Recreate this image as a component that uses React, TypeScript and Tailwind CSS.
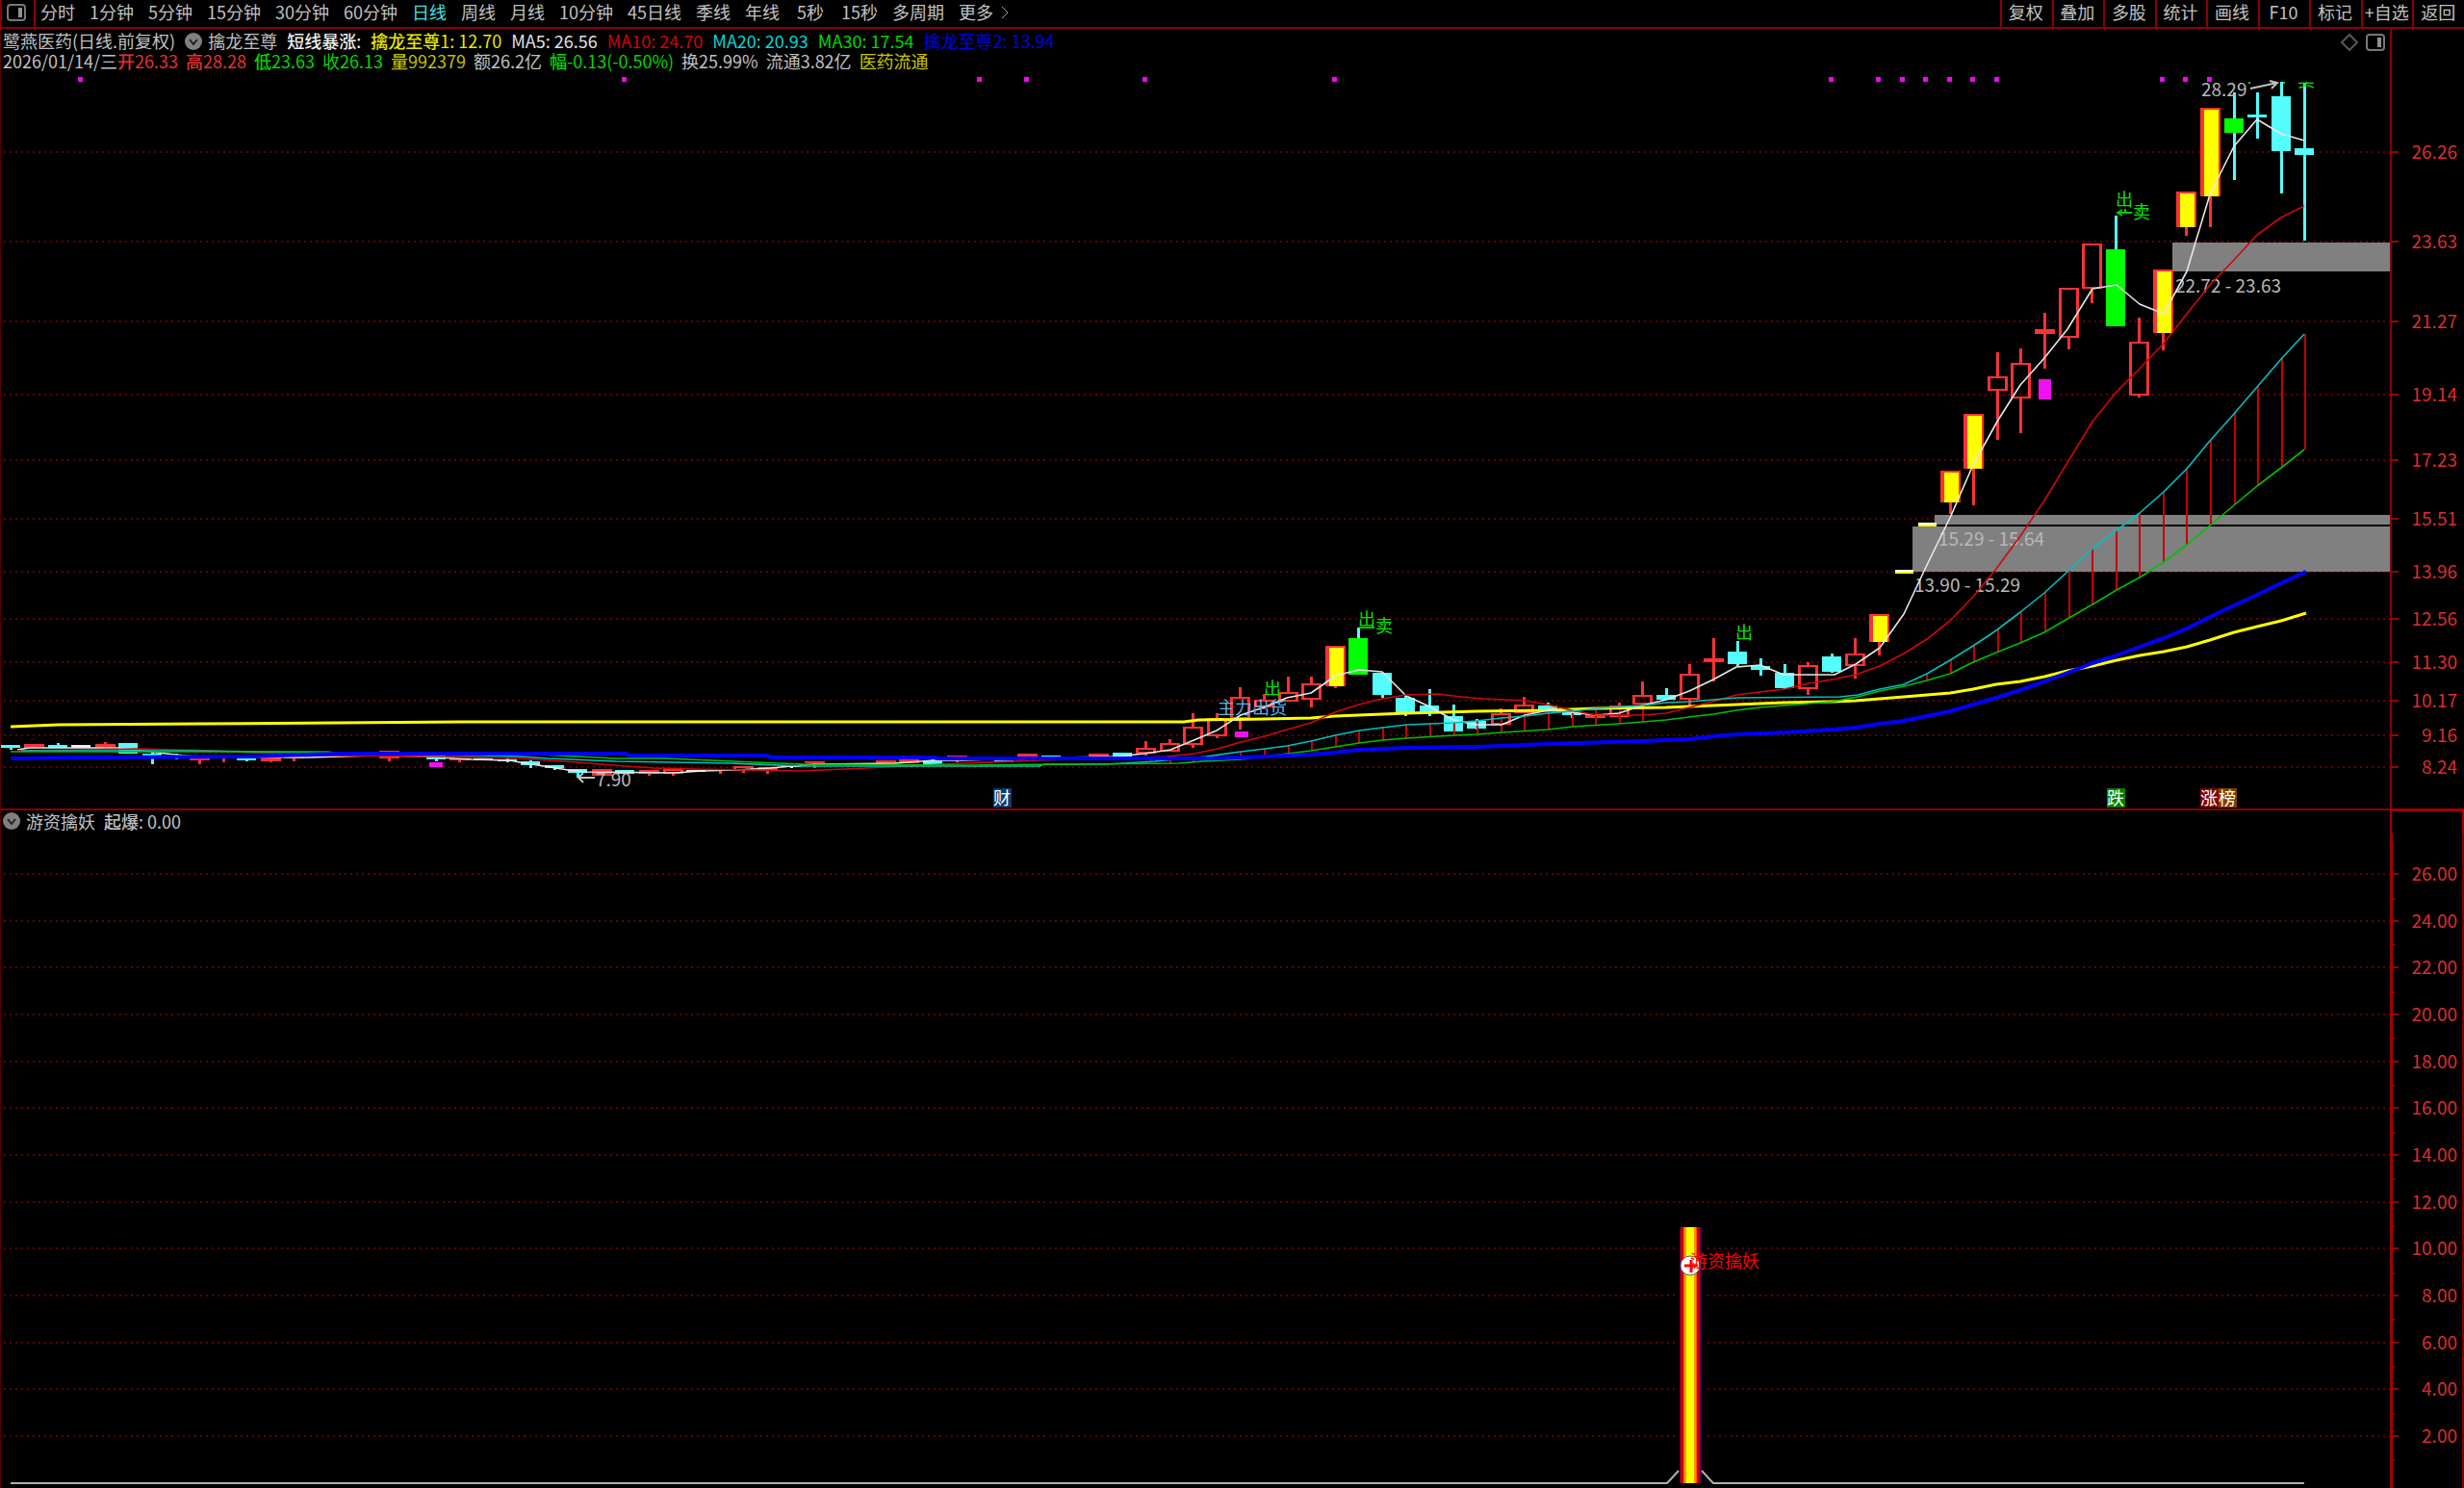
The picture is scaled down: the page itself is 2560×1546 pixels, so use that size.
import React from "react";

type Kind = "R" | "F" | "C" | "Y" | "G" | "W";
// index, high, body top, body bottom, low, kind (chart units)
type Candle = [number, number, number, number, number, Kind];
type Pt = [number, number];

const FONT = "font-['Noto_Sans_CJK_SC','Noto_Sans',sans-serif]";
const AXIS_X = 2484;
const RED = "#ff3232";
const CYAN = "#54fcfc";

const xAt = (i: number) => Math.round(10.5 + 24.576 * i);

const periods = ["分时", "1分钟", "5分钟", "15分钟", "30分钟", "60分钟", "日线", "周线", "月线", "10分钟", "45日线", "季线", "年线", "5秒", "15秒", "多周期"];
const tools = ["复权", "叠加", "多股", "统计", "画线", "F10", "标记", "+自选", "返回"];

const candles: Candle[] = [
  [0, 774, 774, 777, 779, "C"], [1, 773, 773, 777, 777, "F"], [2, 772, 774, 777, 777, "C"], [3, 774, 774, 777, 777, "W"],
  [4, 771, 773, 777, 777, "F"], [5, 772, 772, 783, 783, "C"], [6, 781, 783, 785, 794, "C"], [7, 783, 786, 788, 789, "C"],
  [8, 788, 788, 790, 794, "F"], [9, 786, 786, 788, 792, "F"], [10, 788, 788, 790, 791, "C"], [11, 787, 787, 791, 792, "F"],
  [12, 786, 786, 788, 791, "F"], [16, 780, 780, 788, 791, "R"], [18, 784, 784, 789, 791, "C"], [19, 788, 788, 790, 792, "F"],
  [20, 788, 788, 790, 790, "C"], [21, 788, 789, 791, 792, "C"], [22, 790, 791, 795, 798, "C"], [23, 795, 795, 798, 800, "C"],
  [24, 799, 799, 803, 808, "C"], [25, 799, 799, 806, 806, "F"], [26, 800, 800, 804, 804, "C"], [27, 800, 800, 804, 806, "F"],
  [28, 799, 799, 804, 806, "R"], [29, 800, 800, 802, 802, "W"], [30, 799, 799, 801, 804, "F"], [31, 796, 796, 800, 803, "R"],
  [32, 797, 797, 800, 804, "F"], [33, 795, 795, 797, 798, "W"], [34, 791, 791, 793, 798, "F"], [37, 790, 790, 793, 793, "F"],
  [38, 788, 788, 793, 793, "F"], [39, 788, 790, 794, 794, "C"], [40, 785, 785, 787, 792, "F"], [42, 789, 790, 791, 791, "C"],
  [43, 783, 783, 786, 786, "F"], [44, 785, 785, 787, 787, "C"], [46, 783, 783, 786, 790, "F"], [47, 782, 782, 786, 786, "C"],
  [48, 770, 777, 783, 785, "R"], [49, 768, 772, 781, 781, "R"], [50, 741, 755, 774, 777, "R"], [51, 741, 746, 765, 767, "R"],
  [52, 714, 724, 747, 758, "R"], [53, 721, 727, 735, 737, "R"], [54, 703, 719, 729, 729, "R"], [55, 703, 710, 727, 735, "R"],
  [56, 672, 672, 713, 715, "Y"], [57, 652, 663, 701, 701, "G"], [58, 699, 699, 722, 725, "C"], [59, 722, 725, 741, 744, "C"],
  [60, 716, 733, 740, 744, "C"], [61, 732, 744, 760, 760, "C"], [62, 747, 749, 757, 758, "C"], [63, 736, 741, 753, 753, "R"],
  [64, 724, 732, 741, 741, "R"], [65, 730, 733, 738, 738, "C"], [66, 739, 740, 743, 746, "C"], [67, 742, 742, 746, 746, "F"],
  [68, 730, 733, 745, 745, "R"], [69, 708, 722, 732, 732, "R"], [70, 715, 722, 727, 727, "C"], [71, 690, 700, 727, 733, "R"],
  [72, 663, 684, 688, 708, "F"], [73, 666, 677, 690, 692, "C"], [74, 684, 692, 696, 702, "C"], [75, 690, 699, 715, 716, "C"],
  [76, 688, 691, 716, 722, "R"], [77, 679, 682, 698, 699, "C"], [78, 663, 679, 692, 705, "R"], [79, 639, 639, 667, 681, "Y"],
  [82, 490, 490, 522, 534, "Y"], [83, 431, 431, 487, 525, "Y"], [84, 366, 391, 406, 457, "R"], [85, 362, 377, 414, 450, "R"],
  [86, 325, 342, 347, 383, "F"], [87, 299, 299, 351, 363, "R"], [88, 253, 253, 300, 315, "R"], [89, 224, 259, 339, 339, "G"],
  [90, 330, 355, 411, 413, "R"], [91, 281, 281, 346, 364, "Y"], [92, 200, 200, 236, 245, "Y"], [93, 113, 113, 204, 236, "Y"],
  [94, 96, 123, 138, 187, "G"], [95, 96, 119, 122, 144, "C"], [96, 85, 100, 157, 201, "C"], [97, 86, 154, 161, 250, "C"],
];

const ma5: Pt[] = [[18, 779], [30, 777], [122, 777], [146, 780], [182, 784], [206, 786], [320, 787], [390, 785], [440, 786], [490, 789], [530, 790], [540, 792], [565, 796], [590, 800], [610, 802], [700, 803], [730, 801], [765, 800], [800, 798], [845, 794], [930, 793], [970, 790], [1000, 790], [1100, 787], [1160, 786], [1189, 783], [1216, 779], [1238, 770], [1264, 759], [1289, 743], [1313, 735], [1337, 725], [1362, 720], [1375, 711], [1387, 702], [1412, 696], [1436, 698], [1461, 723], [1485, 734], [1510, 748], [1534, 753], [1560, 753], [1584, 743], [1608, 738], [1633, 740], [1658, 743], [1682, 741], [1706, 733], [1731, 727], [1755, 718], [1780, 706], [1804, 693], [1829, 691], [1853, 701], [1906, 701], [1928, 690], [1953, 673], [1978, 638], [2002, 587], [2026, 538], [2050, 483], [2075, 438], [2099, 400], [2124, 372], [2148, 342], [2174, 300], [2199, 296], [2223, 316], [2248, 326], [2272, 282], [2296, 202], [2321, 152], [2345, 124], [2370, 139], [2394, 146]];
const ma10: Pt[] = [[18, 780], [146, 778], [220, 780], [260, 782], [340, 785], [450, 786], [540, 788], [600, 792], [650, 796], [680, 798], [720, 799], [832, 801], [900, 798], [1000, 793], [1080, 790], [1150, 788], [1212, 786], [1241, 783], [1265, 778], [1289, 771], [1314, 765], [1337, 758], [1362, 751], [1387, 740], [1412, 732], [1436, 726], [1461, 722], [1494, 721], [1518, 724], [1542, 726], [1584, 728], [1608, 732], [1633, 738], [1658, 743], [1706, 743], [1731, 741], [1755, 735], [1779, 729], [1804, 722], [1828, 719], [1854, 716], [1879, 710], [1904, 706], [1928, 701], [1953, 692], [1978, 679], [2002, 664], [2026, 645], [2050, 620], [2074, 591], [2099, 557], [2124, 520], [2149, 479], [2174, 438], [2199, 407], [2223, 383], [2248, 357], [2272, 326], [2296, 296], [2322, 269], [2345, 244], [2370, 226], [2394, 214]];
const ma20: Pt[] = [[22, 780], [200, 780], [330, 782], [390, 784], [500, 785], [540, 786], [570, 788], [640, 791], [760, 793], [835, 796], [1080, 796], [1085, 794], [1150, 794], [1200, 791], [1253, 786], [1289, 781], [1314, 778], [1337, 775], [1362, 770], [1387, 764], [1412, 759], [1436, 756], [1461, 753], [1510, 751], [1534, 749], [1560, 746], [1584, 744], [1608, 741], [1633, 739], [1658, 736], [1706, 733], [1731, 730], [1755, 729], [1780, 727], [1804, 725], [1912, 724], [1930, 722], [1953, 716], [1978, 711], [2002, 700], [2026, 686], [2050, 671], [2074, 655], [2099, 636], [2124, 616], [2148, 594], [2175, 569], [2199, 551], [2223, 533], [2248, 511], [2272, 487], [2296, 458], [2321, 430], [2345, 402], [2370, 373], [2394, 347]];
const ma30: Pt[] = [[11, 781], [340, 781], [355, 783], [560, 784], [600, 786], [640, 788], [690, 788], [740, 790], [785, 792], [835, 794], [1000, 795], [1225, 793], [1249, 791], [1289, 789], [1337, 783], [1362, 780], [1387, 776], [1412, 772], [1436, 769], [1461, 767], [1510, 764], [1534, 763], [1560, 761], [1608, 758], [1633, 755], [1682, 752], [1731, 748], [1755, 745], [1780, 742], [1804, 738], [1828, 735], [1904, 729], [1930, 724], [1953, 718], [1978, 713], [2002, 707], [2026, 700], [2050, 688], [2074, 678], [2099, 668], [2124, 657], [2148, 643], [2174, 628], [2199, 613], [2223, 600], [2248, 584], [2272, 566], [2296, 546], [2321, 525], [2345, 505], [2370, 486], [2394, 467]];
const dragon1: Pt[] = [[11, 755], [61, 753], [207, 752], [478, 750], [1230, 750], [1245, 748], [1314, 747], [1362, 746], [1387, 744], [1461, 741], [1534, 739], [1608, 738], [1658, 736], [1731, 735], [1780, 733], [1853, 730], [1904, 729], [1928, 728], [1953, 726], [1978, 724], [2002, 722], [2026, 720], [2050, 716], [2074, 711], [2099, 708], [2124, 703], [2148, 697], [2174, 692], [2199, 686], [2223, 681], [2248, 677], [2272, 672], [2296, 665], [2321, 657], [2345, 651], [2370, 645], [2396, 637]];
const dragon2: Pt[] = [[11, 788], [84, 787], [256, 786], [355, 783], [650, 783], [654, 785], [797, 785], [801, 787], [970, 787], [975, 788], [1265, 788], [1313, 786], [1362, 784], [1387, 782], [1412, 779], [1461, 777], [1534, 776], [1608, 773], [1706, 770], [1755, 768], [1780, 765], [1804, 763], [1854, 761], [1904, 758], [1928, 756], [1953, 752], [1978, 749], [2002, 744], [2026, 739], [2050, 732], [2074, 725], [2099, 717], [2124, 708], [2148, 699], [2174, 689], [2199, 681], [2223, 672], [2248, 663], [2272, 653], [2296, 641], [2321, 629], [2345, 618], [2370, 606], [2396, 594]];

const yOn = (line: Pt[], x: number) => {
  for (let k = 1; k < line.length; k++) {
    const [x0, y0] = line[k - 1];
    const [x1, y1] = line[k];
    if (x <= x1) return y0 + ((y1 - y0) * (x - x0)) / (x1 - x0);
  }
  return line[line.length - 1][1];
};

const range = (a: number, b: number) => Array.from({ length: b - a + 1 }, (_, k) => a + k);
const sticks = [...range(48, 69), ...range(80, 97)];
const dots = [3, 26, 41, 43, 48, 56, 77, 79, 80, 81, 82, 83, 84, 91, 92, 93];

const priceTicks = ["26.26", "23.63", "21.27", "19.14", "17.23", "15.51", "13.96", "12.56", "11.30", "10.17", "9.16", "8.24"];
const priceY = (v: string) => Math.round(157.5 + (26.26 - Number(v)) * 35.47);
const countTicks = range(1, 13).map((n) => n * 2);
const countY = (v: number) => Math.round(1540.5 - v * 24.32);

function Line({ pts, color, width = 1.6 }: { pts: Pt[]; color: string; width?: number }) {
  return <polyline points={pts.map((p) => p.join(",")).join(" ")} fill="none" stroke={color} strokeWidth={width} strokeLinejoin="round" />;
}

function Bar({ c }: { c: Candle }) {
  const [i, hi, top, bot, lo, kind] = c;
  const x = xAt(i);
  const h = Math.max(bot - top, 2);
  const wick = kind === "C" || kind === "G" ? CYAN : kind === "W" ? "#f0f0f0" : RED;
  return (
    <g shapeRendering="crispEdges">
      {hi < top && <rect x={x - 1} y={hi} width={3} height={top - hi} fill={wick} />}
      {lo > bot && <rect x={x - 1} y={bot} width={3} height={lo - bot} fill={wick} />}
      {kind === "R" && (
        <path
          d={`M${x - 10} ${top}h21v${h}h-21z M${x - 7} ${top + 2}h15v${Math.max(h - 4, 1)}h-15z`}
          fillRule="evenodd"
          fill={RED}
        />
      )}
      {kind === "F" && <rect x={x - 10} y={top} width={21} height={h} fill={RED} />}
      {kind === "C" && <rect x={x - 10} y={top} width={20} height={h} fill={CYAN} />}
      {kind === "G" && <rect x={x - 10} y={top} width={20} height={h} fill="#00ff00" />}
      {kind === "W" && <rect x={x - 10} y={top} width={20} height={h} fill="#f0f0f0" />}
      {kind === "Y" && (
        <>
          <rect x={x - 10} y={top - 1} width={21} height={h + 1} fill={RED} />
          <rect x={x - 6} y={top + 1} width={15} height={h - 1} fill="#ffff00" />
        </>
      )}
    </g>
  );
}

function Grid({ ys }: { ys: number[] }) {
  return (
    <g stroke="#640000" strokeWidth={2} strokeDasharray="2 4" shapeRendering="crispEdges">
      {ys.map((y) => (
        <line key={y} x1={4} x2={AXIS_X} y1={y} y2={y} />
      ))}
    </g>
  );
}

function AxisLabels({ items }: { items: [string, number][] }) {
  return (
    <g className="text-[19px]">
      {items.map(([label, y]) => (
        <g key={label}>
          <rect x={AXIS_X} y={y - 1} width={8} height={2} fill="#a00000" />
          <text x={2553} y={y + 7} textAnchor="end" fill="#dc2c2c">
            {label}
          </text>
        </g>
      ))}
    </g>
  );
}

function Tag({ x, label, bg }: { x: number; label: string; bg: string }) {
  return (
    <g>
      <rect x={x} y={819} width={19} height={20} fill={bg} />
      <text x={x} y={836} fill="#ffffff">
        {label}
      </text>
    </g>
  );
}

function PriceChart() {
  return (
    <svg viewBox="0 76 2560 764" className="block w-full text-[18px]" role="img" aria-label="日线K线图">
      <defs>
        <clipPath id="top-edge">
          <rect x={2380} y={85} width={40} height={20} />
        </clipPath>
      </defs>
      <Grid ys={priceTicks.map(priceY)} />
      <rect x={0} y={76} width={1} height={764} fill="#5a0000" />
      <rect x={2257} y={252} width={226} height={30} fill="#808080" />
      <rect x={2010} y={535} width={473} height={10} fill="#808080" />
      <rect x={1987} y={547} width={496} height={47} fill="#808080" />
      <rect x={AXIS_X - 1} y={76} width={2} height={764} fill="#8c0000" />
      <AxisLabels items={priceTicks.map((t) => [t, priceY(t)])} />

      {dots.map((i) => (
        <rect key={i} x={xAt(i) - 3} y={80} width={5} height={5} fill="#ff00ff" />
      ))}

      {candles.map((c) => (
        <Bar key={c[0]} c={c} />
      ))}
      {[
        [1969, 593],
        [1993, 544],
      ].map(([x, y]) => (
        <g key={x}>
          <rect x={x} y={y} width={19} height={3} fill="#ffff00" />
          <rect x={x} y={y - 1} width={19} height={2} fill="#ffffff" />
        </g>
      ))}

      <g fill="#b8b8b8" className="text-[19px]">
        <text x={2260} y={304}>22.72 - 23.63</text>
        <text x={2014} y={567}>15.29 - 15.64</text>
        <text x={1989} y={615}>13.90 - 15.29</text>
        <text x={2287} y={100}>28.29</text>
        <text x={619} y={817}>7.90</text>
      </g>
      <g fill="none" stroke="#c0c0c0" strokeWidth={2}>
        <path d="M2338 92 L2366 86 M2358 84 L2366 86 L2360 92" />
        <path d="M601 808 H618 M606 803 L601 808 L606 813" />
      </g>

      <g stroke="#c80000" strokeWidth={2} shapeRendering="crispEdges">
        {sticks.map((i) => {
          const x = xAt(i) + 1;
          return <line key={i} x1={x} x2={x} y1={yOn(ma20, x)} y2={yOn(ma30, x)} />;
        })}
      </g>

      <Line pts={dragon1} color="#ffff00" width={3} />
      <Line pts={ma5} color="#e8e8e8" />
      <Line pts={ma10} color="#d00808" />
      <Line pts={ma20} color="#00c0c0" />
      <Line pts={ma30} color="#00c000" />
      <Line pts={dragon2} color="#0000ff" width={4} />

      <rect x={446} y={792} width={14} height={5} fill="#f010f0" />
      <rect x={1283} y={760} width={14} height={6} fill="#f010f0" />
      <rect x={2118} y={394} width={13} height={21} fill="#f010f0" />

      <g fill="#00e600">
        <text x={1313} y={722}>出</text>
        <text x={1411} y={650}>出</text>
        <text x={1429} y={657}>卖</text>
        <text x={1803} y={664}>出</text>
        <text x={2198} y={214}>出</text>
        <text x={2216} y={227}>卖</text>
        <text x={2387} y={90} clipPath="url(#top-edge)">卖</text>
        <rect x={2336} y={85} width={2} height={2} />
        <rect x={2372} y={85} width={2} height={2} />
      </g>
      <path d="M1412 652 H1428 M2200 221 H2215 M2205 218 L2200 221 L2205 224 M2208 217 V222" fill="none" stroke="#00c800" strokeWidth={2} />
      <text x={1265} y={742} fill="#5ab4e6">主力出货</text>

      <Tag x={1032} label="财" bg="#0c3c70" />
      <Tag x={2189} label="跌" bg="#008000" />
      <Tag x={2286} label="涨" bg="#800000" />
      <Tag x={2305} label="榜" bg="#804000" />
    </svg>
  );
}

function SignalChart() {
  return (
    <svg viewBox="0 866 2560 680" className="block w-full text-[18px]" role="img" aria-label="游资擒妖指标图">
      <Grid ys={countTicks.map(countY)} />
      <rect x={0} y={866} width={1} height={680} fill="#5a0000" />
      <rect x={AXIS_X - 1} y={866} width={3} height={680} fill="#a00000" />
      <rect x={2558} y={866} width={2} height={680} fill="#780000" />
      {countTicks.map((v) => (
        <rect key={v} x={AXIS_X} y={countY(v - 1)} width={4} height={2} fill="#a00000" />
      ))}
      <AxisLabels items={countTicks.map((v) => [v.toFixed(2), countY(v)])} />

      <g shapeRendering="crispEdges">
        <rect x={1741} y={1275} width={30} height={254} fill="#000000" />
        <rect x={1745} y={1275} width={23} height={266} fill="#500050" />
        <rect x={1746} y={1275} width={20} height={266} fill="#c80000" />
        <rect x={1749} y={1275} width={14} height={266} fill="#ff6000" />
        <rect x={1750} y={1275} width={12} height={266} fill="#ff9600" />
        <rect x={1752} y={1275} width={8} height={266} fill="#ffff00" />
      </g>
      <path d="M11 1541 H1732 L1744 1528 M1768 1528 L1780 1541 H2394" fill="none" stroke="#b0b0b0" strokeWidth={2} />
      <circle cx={1756} cy={1315} r={10} fill="#ffffff" stroke="#606060" strokeWidth={1} />
      <path d="M1750 1315 H1764 M1757 1309 V1322" stroke="#ff0000" strokeWidth={3} />
      <text x={1756} y={1317} fill="#ff0000">游资擒妖</text>
    </svg>
  );
}

function PanelIcon() {
  return (
    <svg viewBox="0 0 20 18" className="block h-[18px] w-5" aria-hidden="true">
      <rect x={1} y={1} width={18} height={16} rx={3} fill="none" stroke="#787878" strokeWidth={2} />
      <rect x={12} y={4} width={4} height={10} fill="#909090" />
    </svg>
  );
}

function DropButton({ label }: { label: string }) {
  return (
    <button type="button" aria-label={label} className="block h-[18px] w-[18px] shrink-0">
      <svg viewBox="0 0 18 18" className="block h-full w-full" aria-hidden="true">
        <circle cx={9} cy={9} r={9} fill="#808080" />
        <path d="M5 7 L9 12 L13 7" fill="none" stroke="#202020" strokeWidth={2} />
      </svg>
    </button>
  );
}

export default function App() {
  return (
    <main className={`flex min-h-screen w-full flex-col overflow-hidden bg-black text-[18px] leading-[21px] whitespace-nowrap text-[#c0c0c0] ${FONT}`}>
      <header className="flex h-[30px] items-stretch border-b-2 border-[#8c0000]">
        <button type="button" aria-label="切换侧栏" className="mr-[5px] flex w-[37px] items-center border-x-2 border-[#8c0000] pb-[2px] pl-[5px]">
          <PanelIcon />
        </button>
        <nav aria-label="周期" className="flex grow items-center gap-[15px] pb-[3px]">
          {periods.map((p) => (
            <button key={p} type="button" className={p === "日线" ? "text-[#40e0e0]" : p === "5秒" ? "px-[3px]" : ""}>
              {p}
            </button>
          ))}
          <button type="button" className="flex items-center gap-2">
            更多
            <svg viewBox="0 0 10 16" className="h-4 w-[10px]" aria-hidden="true">
              <path d="M1 2 L7 8 L1 14" fill="none" stroke="#a0a0a0" strokeWidth={1} />
            </svg>
          </button>
        </nav>
        <div className="grid w-[482px] grid-cols-9">
          {tools.map((t) => (
            <button key={t} type="button" className="flex items-center justify-center border-l-2 border-[#8c0000] pr-[2px] pb-[3px]">
              {t}
            </button>
          ))}
        </div>
      </header>

      <section aria-label="主图">
        <div className="flex border-l border-[#5a0000]">
          <div className="grow py-[2px] pl-[2px]">
            <div className="flex items-center gap-[10px]">
              <h1>鹭燕医药(日线.前复权)</h1>
              <DropButton label="选择主图指标" />
              <span className="-ml-1">擒龙至尊</span>
              <span className="text-[#f0f0f0]"><b className="font-medium">短线暴涨</b>:</span>
              <span className="text-[#e6e600]"><b className="font-medium">擒龙至尊</b>1: 12.70</span>
              <span className="text-[#e0e0e0]">MA5: 26.56</span>
              <span className="text-[#d80000]">MA10: 24.70</span>
              <span className="text-[#00d8d8]">MA20: 20.93</span>
              <span className="text-[#00d800]">MA30: 17.54</span>
              <span className="text-[#0000e6]">擒龙至尊2: 13.94</span>
            </div>
            <div className="flex items-center gap-2">
              <span className="-mr-2">2026/01/14/三</span>
              <span className="text-[#e63030]"><b className="font-medium">开</b>26.33</span>
              <span className="text-[#e63030]"><b className="font-medium">高</b>28.28</span>
              <span className="text-[#00d800]"><b className="font-medium">低</b>23.63</span>
              <span className="text-[#00d800]">收26.13</span>
              <span className="text-[#c0c000]"><b className="font-medium">量</b>992379</span>
              <span>额26.2亿</span>
              <span className="text-[#00d800]"><b className="font-medium">幅</b>-0.13(-0.50%)</span>
              <span>换25.99%</span>
              <span>流通3.82亿</span>
              <span className="text-[#c8c800]">医药流通</span>
            </div>
          </div>
          <div className="flex items-start gap-2 pt-[5px] pr-[5px]">
            <button type="button" aria-label="标记点" className="block">
              <svg viewBox="0 0 18 18" className="block h-[18px] w-[18px]" aria-hidden="true">
                <path d="M9 1 L17 9 L9 17 L1 9 Z" fill="none" stroke="#585858" strokeWidth={2} />
              </svg>
            </button>
            <button type="button" aria-label="展开面板" className="block">
              <PanelIcon />
            </button>
          </div>
          <div className="w-[77px] border-l-2 border-[#8c0000]" />
        </div>
        <PriceChart />
      </section>

      <section aria-label="副图">
        <div className="flex h-[26px] border-l border-[#5a0000]">
          <div className="flex grow items-center gap-[6px] border-t-2 border-[#8c0000] pb-[2px] pl-[2px]">
            <DropButton label="选择副图指标" />
            <h2>游资擒妖</h2>
            <span className="ml-[3px]"><b className="font-medium">起爆</b>: 0.00</span>
          </div>
          <div className="w-[77px] border-x-2 border-t-[3px] border-[#a00000]" />
        </div>
        <SignalChart />
      </section>
    </main>
  );
}
